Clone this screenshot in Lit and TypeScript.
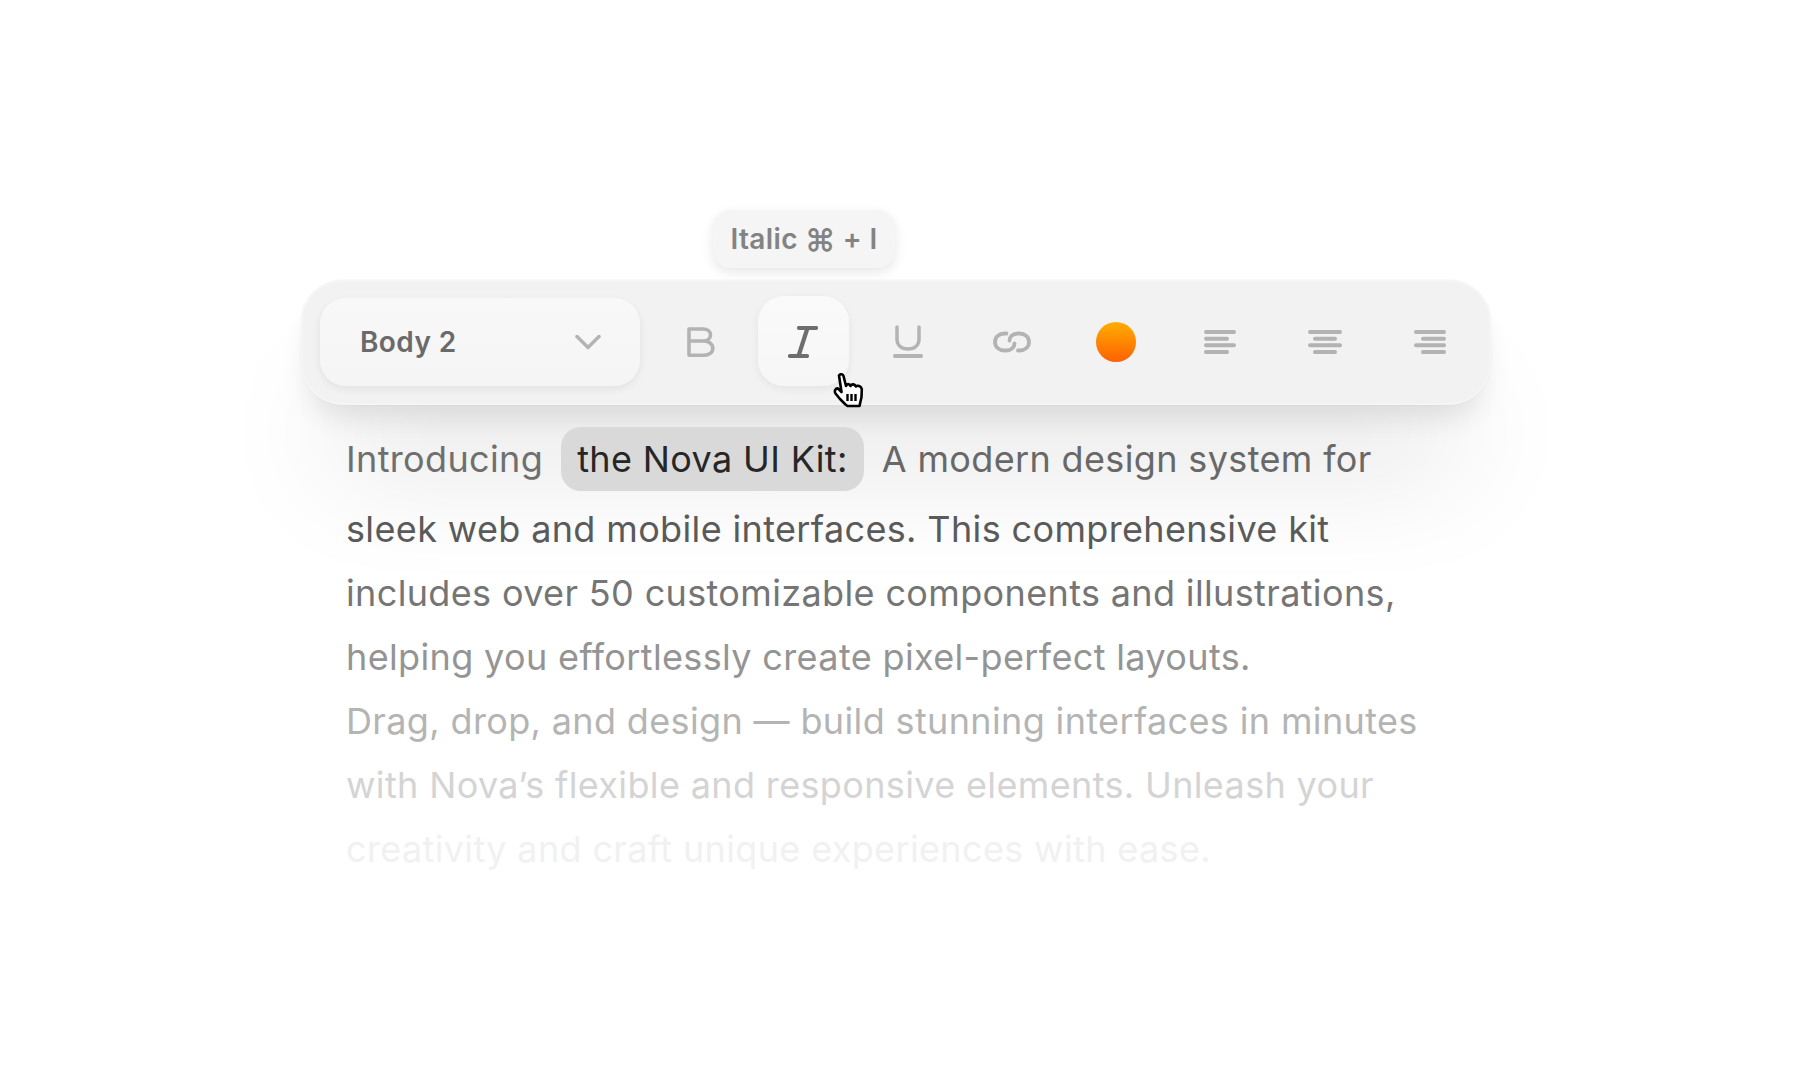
import { LitElement, html, css, svg } from "lit";
import { customElement } from "lit/decorators.js";

const bars = (kind: string) => {
  const rows = kind === "l" ? [[0, 32], [0, 25], [0, 32], [0, 25]] : kind === "c" ? [[0, 34], [5, 24], [0, 34], [5, 24]] : [[1, 32], [8, 25], [1, 32], [8, 25]];
  return html`<svg width="34" height="24" viewBox="0 0 34 24">${rows.map((r, i) => svg`<rect x=${r[0]} y=${i * 6.67} width=${r[1]} height="4" rx="2" fill="#b3b3b3"></rect>`)}</svg>`;
};

@customElement("app-root")
export class AppRoot extends LitElement {
  static styles = css`
    :host { display: block; height: 1090px; background: #fff; font-family: Inter, "Liberation Sans", sans-serif; overflow: hidden; }
    .page { display: flex; flex-direction: column; align-items: flex-start; padding: 280px 0 0 301px; }
    .toolbar { position: relative; box-sizing: border-box; width: 1190px; height: 125px; border-radius: 42px; background: #f2f2f2; box-shadow: 0 90px 120px -30px rgba(0,0,0,.13), 0 22px 30px -10px rgba(0,0,0,.11), 0 0 0 1px #fafafa, inset 0 0 0 1.5px #f6f6f6; display: flex; align-items: center; gap: 13.4px; padding: 0 16px 2px 19px; }
    .select { box-sizing: border-box; width: 320px; height: 88px; flex: none; border-radius: 26px; background: linear-gradient(#f8f8f8, #f5f5f5); box-shadow: 0 3px 8px rgba(0,0,0,.07); display: flex; align-items: center; justify-content: space-between; padding: 0 39px 0 40px; font-size: 28px; font-weight: 600; letter-spacing: .4px; color: #6a6a6a; }
    .cell { flex: none; width: 91px; height: 90px; margin-top: -2px; padding-top: 2px; box-sizing: border-box; display: flex; align-items: center; justify-content: center; border-radius: 26px; position: relative; }
    .cell.active { background: linear-gradient(#fafafa, #f6f6f6); box-shadow: 0 3px 8px rgba(0,0,0,.06); }
    .nudge { margin-left: 5px; }
    .swatch { width: 40px; height: 40px; border-radius: 50%; background: linear-gradient(#ffae00, #ff6000); }
    .tip { position: absolute; left: 412px; top: -70px; width: 182px; height: 58px; box-sizing: border-box; border-radius: 18px; background: #f5f5f5; box-shadow: 0 4px 12px rgba(0,0,0,.1); display: flex; align-items: center; justify-content: center; gap: 7px; font-size: 28px; font-weight: 600; letter-spacing: .4px; color: #838383; white-space: nowrap; }
    .k { font-size: 31px; line-height: 1; }
    .cursor { position: absolute; left: 532px; top: 93px; }
    .text { position: relative; margin: 22px 0 0 45px; font-size: 36px; letter-spacing: .36px; white-space: nowrap; }
    .line { height: 64px; line-height: 64px; }
    .first { display: flex; align-items: center; gap: 18px; height: 64px; margin-bottom: 6px; color: #6f6f6f; }
    .mark { background: #d9d9d9; border-radius: 20px; color: #262626; padding: 0 16px; line-height: 64px; }
    .c2 { color: #5a5a5a; } .c3 { color: #757575; } .c4 { color: #949494; } .c5 { color: #b4b4b4; } .c6 { color: #d4d4d4; } .c7 { color: #f1f1f1; }
    .a { color: #686868; }
    svg { display: block; }
  `;
  render() {
    return html`<div class="page">
      <div class="toolbar">
        <div class="tip"><span>Italic</span><span class="k">⌘</span><span>+ I</span></div>
        <div class="select"><span>Body 2</span>
          <svg width="26" height="16" viewBox="0 0 26 16"><path d="M2 2.500L13 13.500L24 2.500" fill="none" stroke="#b3b3b3" stroke-width="3.500" stroke-linecap="round" stroke-linejoin="round"></path></svg>
        </div>
        <div class="cell"><svg class="nudge" width="28" height="30" viewBox="0 0 28 30"><path d="M2 14H16C20.500 14 23.500 11.500 23.500 8C23.500 4.500 20.500 2 16 2H2V28.200H17C22 28.200 25.800 25.500 25.800 21.500C25.800 17 22 14 17 14H16" fill="none" stroke="#b3b3b3" stroke-width="3.600" stroke-linejoin="round"></path></svg></div>
        <div class="cell active"><svg width="30" height="32" viewBox="0 0 30 32"><path d="M11 2H28M2 30H19M19.500 2L10.500 30" fill="none" stroke="#6e6e6e" stroke-width="4.200" stroke-linecap="round"></path></svg></div>
        <div class="cell"><svg width="30" height="33" viewBox="0 0 30 33"><path d="M4 2V14C4 20 8 24 15 24C22 24 26 20 26 14V2" fill="none" stroke="#b3b3b3" stroke-width="3.500" stroke-linecap="round"></path><rect y="29" width="30" height="4" rx="2" fill="#b3b3b3"></rect></svg></div>
        <div class="cell"><svg width="38" height="22" viewBox="0 0 38 22"><path d="M13.500 2.500H11.500C6 2.500 2 6 2 11C2 16 6 19.500 11.500 19.500H13C18.500 19.500 21.500 16 21.500 12.500M25 19.500H26.500C32 19.500 36 16 36 11C36 6 32 2.500 26.500 2.500H25C19.500 2.500 16.500 6 16.500 9.500" fill="none" stroke="#b3b3b3" stroke-width="3.800" stroke-linecap="round"></path></svg></div>
        <div class="cell"><div class="swatch"></div></div>
        <div class="cell">${bars("l")}</div>
        <div class="cell">${bars("c")}</div>
        <div class="cell">${bars("r")}</div>
        <svg class="cursor" width="31" height="35" viewBox="0 0 31 35"><path d="M6 2.500C7.500 .5 10 1 10.500 3L13 13C14 10.500 16.500 10.500 17.500 13C19 10.500 21.500 11 23 13.500C24.500 12 28 13 28.800 16L28.500 24L26.500 33H14.500L12.500 31.500L7 26L2.500 20.500C1 18 2.500 15 5 15.500L8.500 19Z" fill="#fff" stroke="#000" stroke-width="2.600" stroke-linejoin="round"></path><path d="M14.500 21V28M18.500 21V28M22.500 21V28" stroke="#000" stroke-width="2.400"></path></svg>
      </div>
      <div class="text">
        <div class="first"><span>Introducing</span><span class="mark">the Nova UI Kit:</span><span class="a">A modern design system for</span></div>
        <div class="line c2">sleek web and mobile interfaces. This comprehensive kit</div>
        <div class="line c3">includes over 50 customizable components and illustrations,</div>
        <div class="line c4">helping you effortlessly create pixel-perfect layouts.</div>
        <div class="line c5">Drag, drop, and design — build stunning interfaces in minutes</div>
        <div class="line c6">with Nova’s flexible and responsive elements. Unleash your</div>
        <div class="line c7">creativity and craft unique experiences with ease.</div>
      </div>
    </div>`;
  }
}
